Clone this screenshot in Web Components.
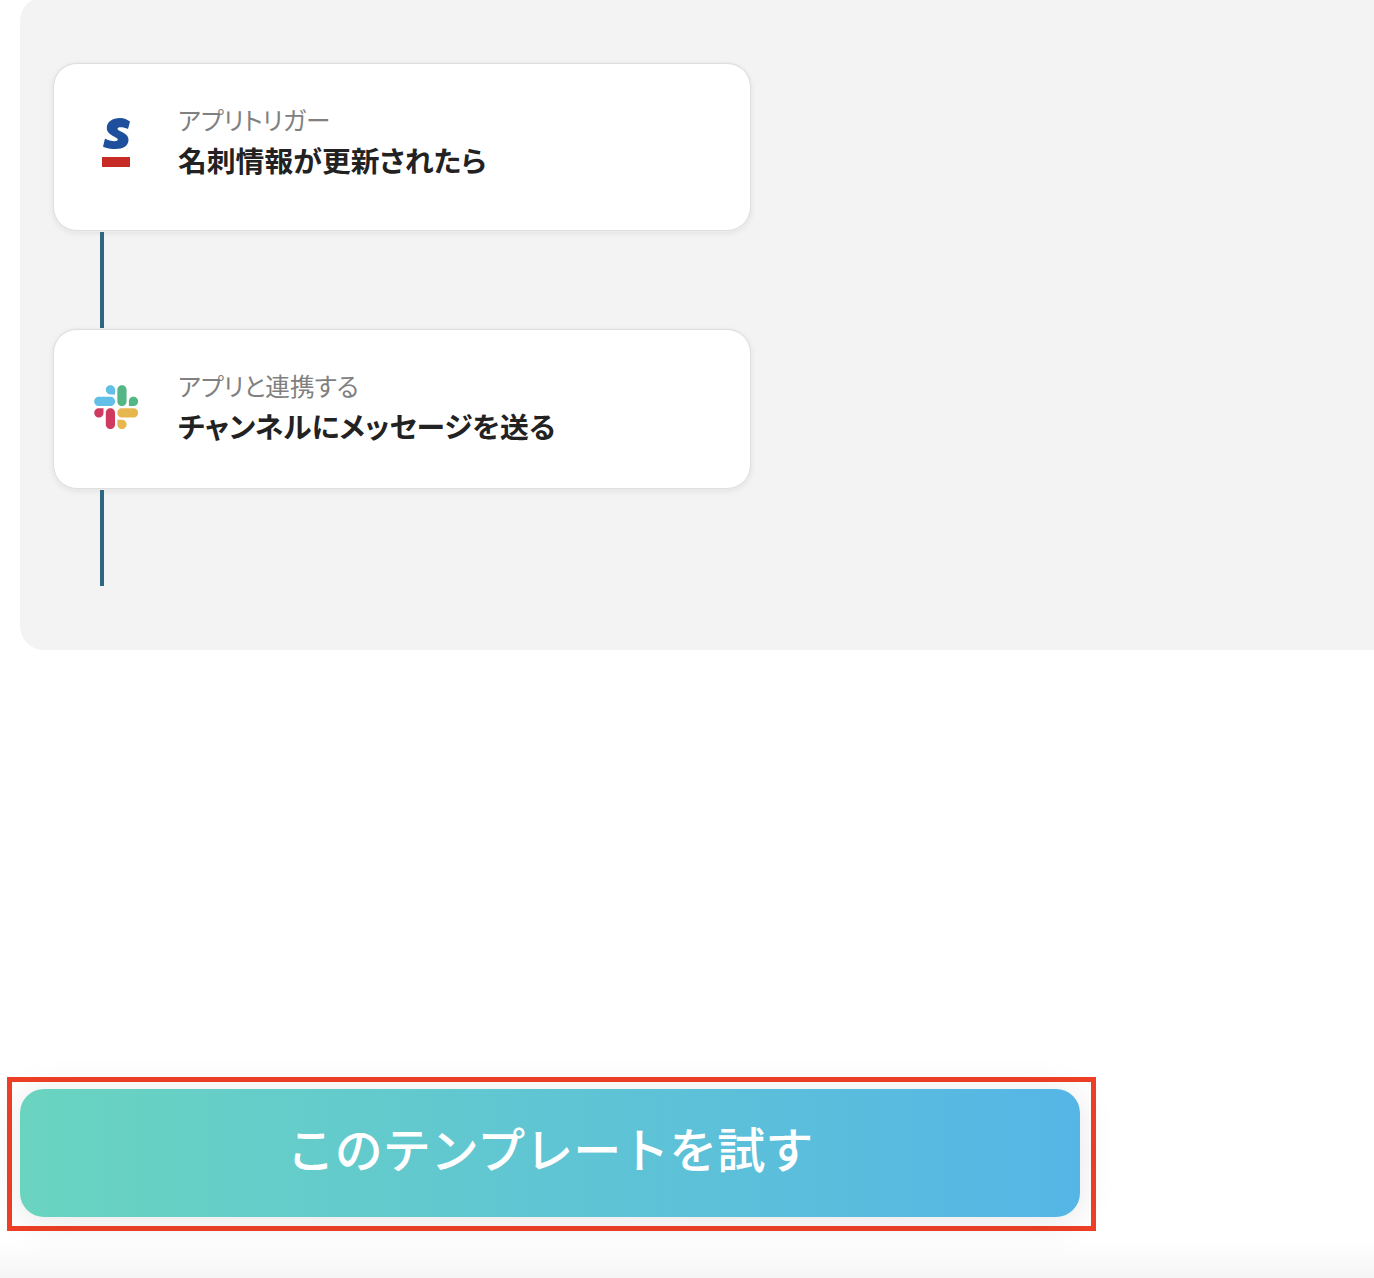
<!DOCTYPE html>
<html lang="ja">
<head>
<meta charset="utf-8">
<title>flow</title>
<style>
    html, body { margin: 0; padding: 0; background: #fff; }
    body {
        height: 1278px;
        overflow: hidden;
        font-family: "Noto Sans CJK JP", "Noto Sans", sans-serif;
    }
</style>
</head>
<body>

<flow-panel>
    <flow-step label="アプリトリガー" title="名刺情報が更新されたら" extra="8">
        <svg slot="icon" width="48" height="52" viewBox="0 0 48 52">
            <path fill="#1d4f9c" d="M38 6.5 36 14C33.5 12.8 31 12.2 28.5 12.2 26.5 12.2 25.5 12.8 25.5 13.8 25.5 15 27 15.6 29.5 16.8 33.5 18.7 36.5 21 36.5 25 36.5 30.8 31 34 23.5 34 19 34 14.5 33.2 11 31.7L13 23.5C16 25.2 19.5 26.2 22.5 26.2 24.5 26.2 25.8 25.6 25.8 24.5 25.8 23.2 24 22.5 21.5 21.2 17.5 19.2 14.8 16.8 14.8 12.8 14.8 6.8 20.5 3 28 3 32 3 35.5 4.7 38 6.5Z"/>
            <rect x="10" y="42" width="28" height="10" fill="#c62c25"/>
        </svg>
    </flow-step>
    <flow-line></flow-line>
    <flow-step label="アプリと連携する" title="チャンネルにメッセージを送る">
        <svg slot="icon" width="48" height="48" viewBox="-5.75 -5.75 137.5 137.5">
            <path fill="#d13a60" d="M27.2 80c0 7.3-5.9 13.2-13.2 13.2C6.7 93.2.8 87.3.8 80c0-7.3 5.9-13.2 13.2-13.2h13.2V80zm6.6 0c0-7.3 5.9-13.2 13.2-13.2 7.3 0 13.2 5.9 13.2 13.2v33c0 7.3-5.9 13.2-13.2 13.2-7.3 0-13.2-5.9-13.2-13.2V80z"/>
            <path fill="#62bfe8" d="M47 27c-7.3 0-13.2-5.9-13.2-13.2C33.8 6.5 39.7.6 47 .6c7.3 0 13.2 5.9 13.2 13.2V27H47zm0 6.7c7.3 0 13.2 5.9 13.2 13.2 0 7.3-5.9 13.2-13.2 13.2H13.9C6.6 60.1.7 54.2.7 46.9c0-7.3 5.9-13.2 13.2-13.2H47z"/>
            <path fill="#54b684" d="M99.9 46.9c0-7.3 5.9-13.2 13.2-13.2 7.3 0 13.2 5.9 13.2 13.2 0 7.3-5.9 13.2-13.2 13.2H99.9V46.9zm-6.6 0c0 7.3-5.9 13.2-13.2 13.2-7.3 0-13.2-5.9-13.2-13.2V13.8C66.9 6.5 72.8.6 80.1.6c7.3 0 13.2 5.9 13.2 13.2v33.1z"/>
            <path fill="#e6b64f" d="M80.1 99.8c7.3 0 13.2 5.9 13.2 13.2 0 7.3-5.9 13.2-13.2 13.2-7.3 0-13.2-5.9-13.2-13.2V99.8h13.2zm0-6.6c-7.3 0-13.2-5.9-13.2-13.2 0-7.3 5.9-13.2 13.2-13.2h33.1c7.3 0 13.2 5.9 13.2 13.2 0 7.3-5.9 13.2-13.2 13.2H80.1z"/>
        </svg>
    </flow-step>
    <flow-line></flow-line>
</flow-panel>

<try-bar>このテンプレートを試す</try-bar>

<script>
class FlowPanel extends HTMLElement {

    constructor() {
        super();
        this.shadow = this.attachShadow({ mode: 'open' });
    }

    connectedCallback() {
        this.shadow.innerHTML =
        `
        <style>
            :host {
                display: block;
                box-sizing: border-box;
                width: 1400px;
                height: 653px;
                margin: -3px 0 0 20px;
                padding: 66px 0 0 33px;
                background: #f3f3f3;
                border-radius: 24px;
            }
            .steps {
                display: flex;
                flex-direction: column;
                width: 698px;
            }
        </style>
        <div class="steps"><slot></slot></div>`;
    }
}

class FlowStep extends HTMLElement {

    constructor() {
        super();
        this.shadow = this.attachShadow({ mode: 'open' });
    }

    connectedCallback() {
        const extra = Number(this.getAttribute('extra') || 0);

        this.shadow.innerHTML =
        `
        <style>
            :host {
                display: block;
                box-sizing: border-box;
                height: ${160 + extra}px;
                padding: 0 38px;
                background: #fff;
                border: 1px solid #dedede;
                border-radius: 24px;
                box-shadow: 0 0 0 1px #ebebeb, 0 2px 6px rgba(0, 0, 0, 0.08);
            }
            .row {
                display: flex;
                gap: 38px;
            }
            .icon {
                flex: none;
                display: flex;
                align-items: center;
                justify-content: center;
                width: 48px;
                height: 52px;
                margin-top: 51px;
            }
            .icon ::slotted(svg) {
                display: block;
            }
            .text {
                padding-top: 40px;
                font-feature-settings: "palt";
            }
            .label {
                height: 31px;
                font-size: 24.6px;
                line-height: 31px;
                color: #808080;
                white-space: nowrap;
            }
            .title {
                height: 40px;
                margin-top: 5px;
                font-size: 28.8px;
                line-height: 40px;
                font-weight: 600;
                color: #222;
                white-space: nowrap;
            }
        </style>
        <div class="row">
            <div class="icon"><slot name="icon"></slot></div>
            <div class="text">
                <div class="label">${this.getAttribute('label')}</div>
                <div class="title">${this.getAttribute('title')}</div>
            </div>
        </div>`;
    }
}

class FlowLine extends HTMLElement {

    constructor() {
        super();
        this.shadow = this.attachShadow({ mode: 'open' });
    }

    connectedCallback() {
        this.shadow.innerHTML =
        `
        <style>
            :host {
                display: block;
                width: 4px;
                height: 96px;
                margin: 1px 0 1px 47px;
                background: #2c6884;
            }
        </style>`;
    }
}

class TryBar extends HTMLElement {

    constructor() {
        super();
        this.shadow = this.attachShadow({ mode: 'open' });
    }

    connectedCallback() {
        this.shadow.innerHTML =
        `
        <style>
            :host {
                display: block;
                box-sizing: border-box;
                height: 628px;
                padding-top: 427px;
                background: linear-gradient(to bottom, #fff 0, #fff 590px, #f5f5f5 628px);
            }
            .mark {
                box-sizing: border-box;
                width: 1089px;
                height: 154px;
                margin-left: 7px;
                padding: 7px 11px 9px 8px;
                border: 5px solid #ee4026;
            }
            button {
                display: block;
                width: 100%;
                height: 100%;
                padding: 0 0 12px;
                border: 0;
                border-radius: 24px;
                background: linear-gradient(to right, #6ad4c0, #55b6e6);
                box-shadow: 0 4px 36px rgba(0, 0, 0, 0.1);
                color: #fff;
                font: inherit;
                font-size: 48px;
                font-weight: 500;
                line-height: 1;
            }
        </style>
        <div class="mark"><button type="button"><slot></slot></button></div>`;
    }
}

customElements.define('flow-panel', FlowPanel);
customElements.define('flow-step', FlowStep);
customElements.define('flow-line', FlowLine);
customElements.define('try-bar', TryBar);
</script>
</body>
</html>
